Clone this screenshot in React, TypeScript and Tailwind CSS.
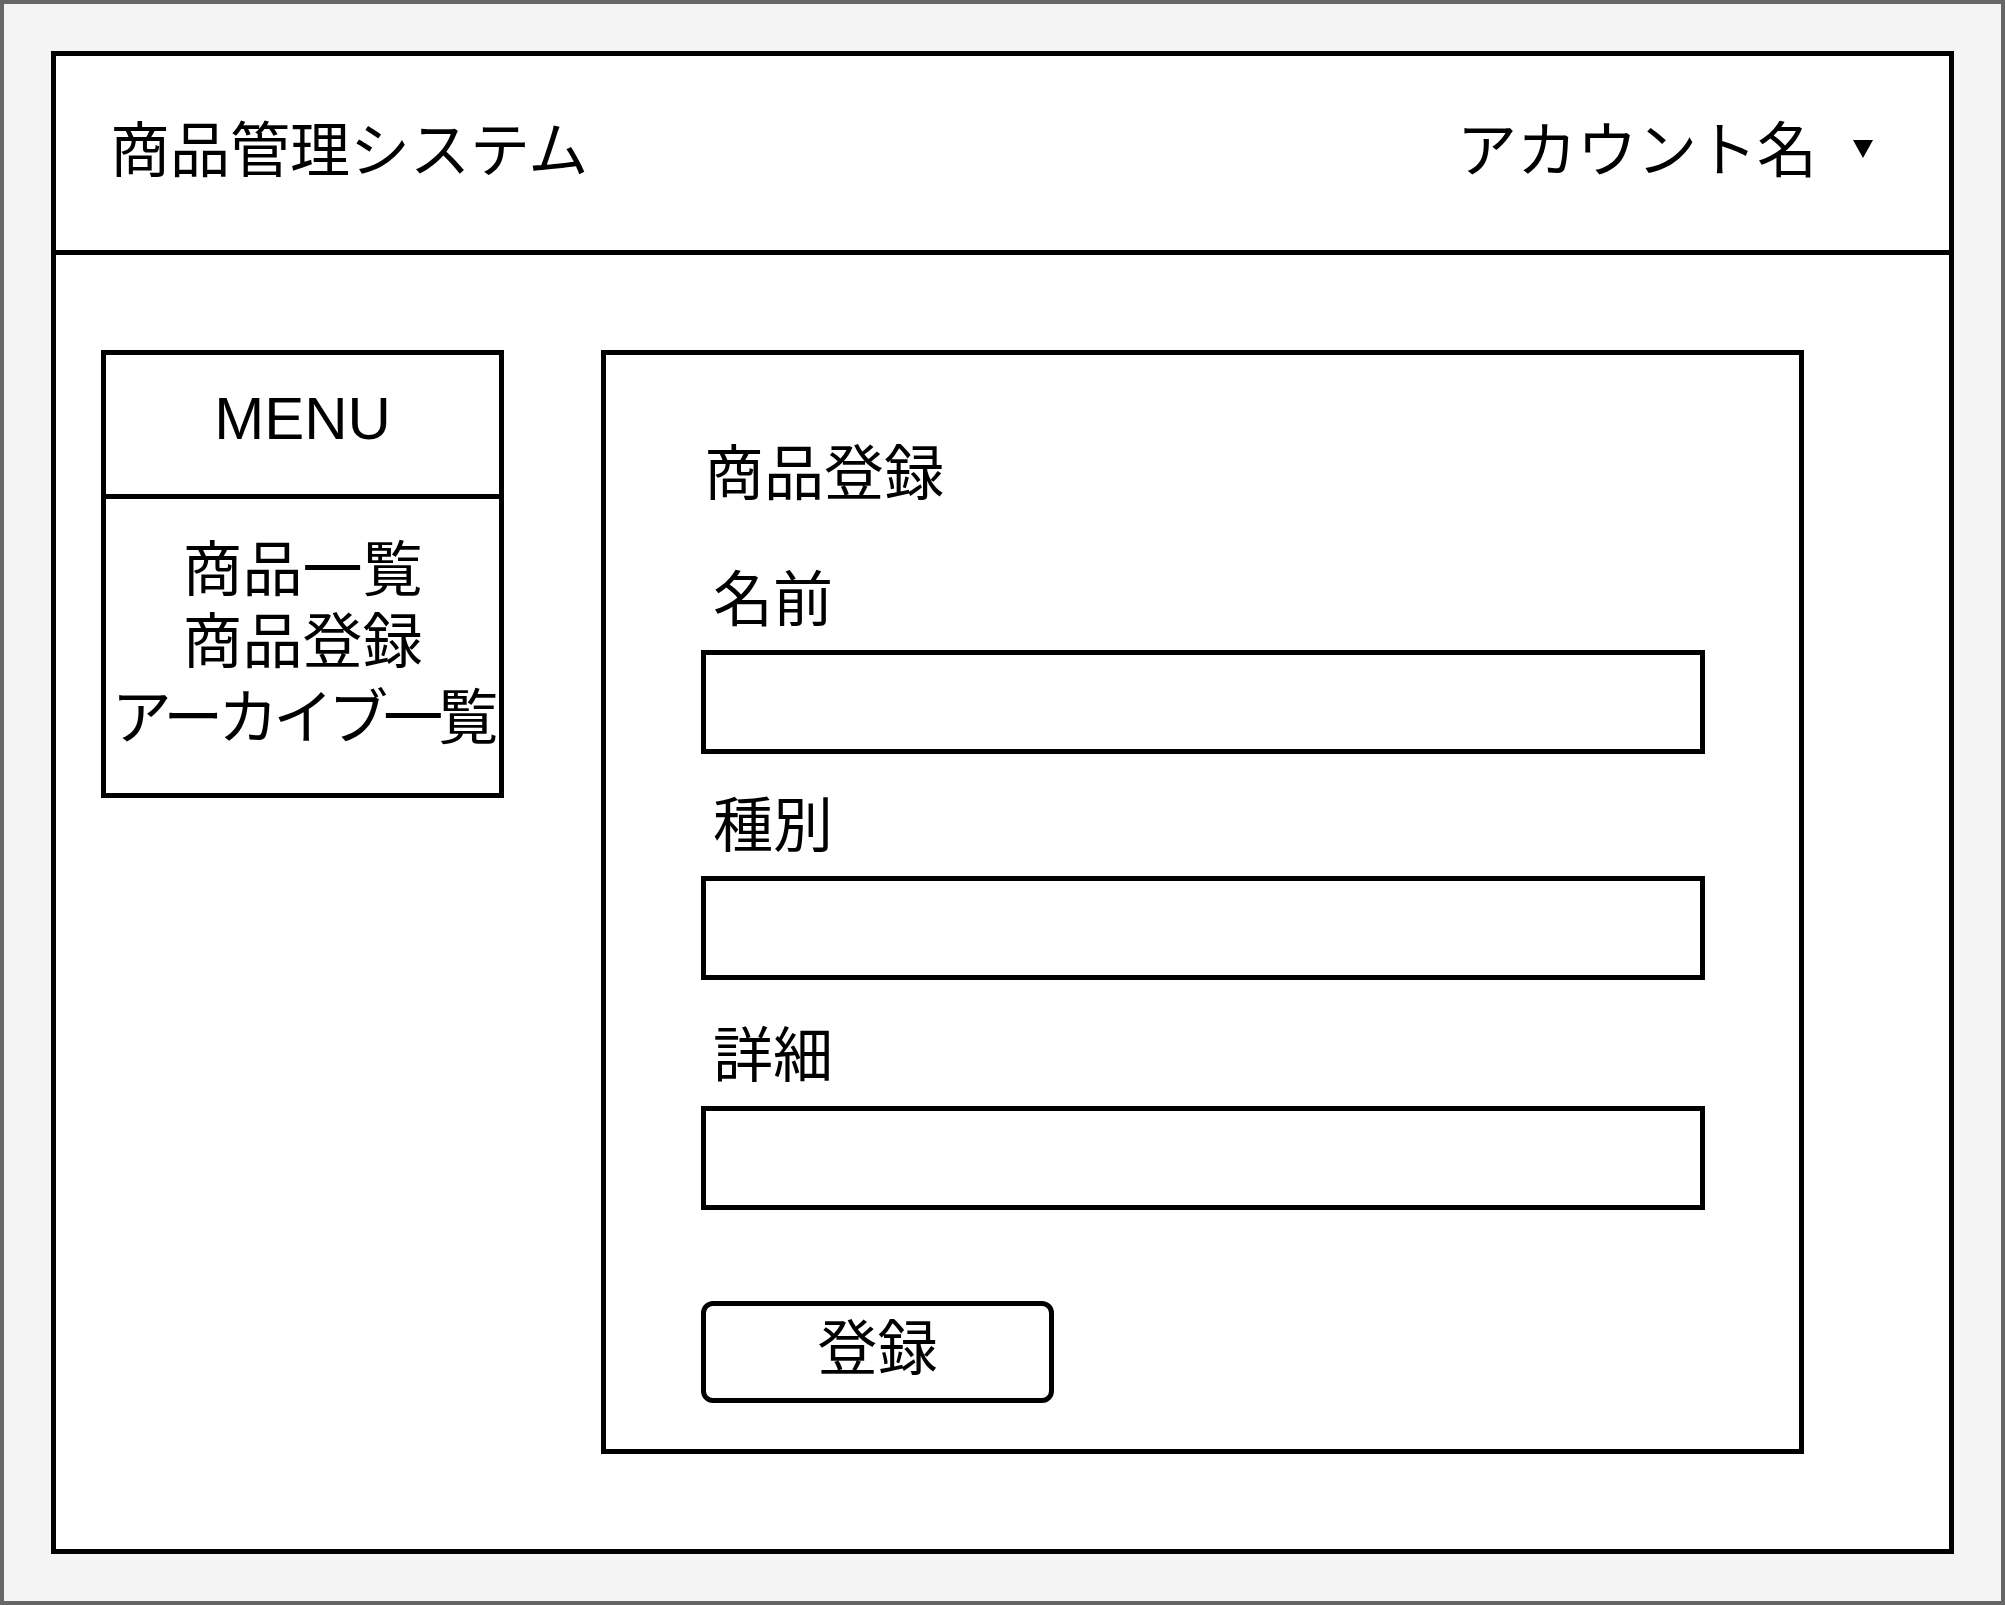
const jp = { fontFamily: '"Noto Sans CJK JP", "Noto Sans", sans-serif' };

function Field({ label, top }: { label: string; top: string }) {
  return (
    <div className={`flex flex-col ${top}`}>
      <div className="pl-[12px] text-[60px] leading-[72px] text-black">{label}</div>
      <div className="mt-[19px] h-[104px] w-[1004px] border-[5px] border-black bg-white" />
    </div>
  );
}

export default function App() {
  return (
    <div
      className="box-border h-[1605px] w-[2005px] border-4 border-[#666666] bg-[#f4f4f4] p-[47px]"
      style={jp}
    >
      <div className="flex h-full flex-col border-[5px] border-black bg-white">
        {/* Header */}
        <header className="flex h-[199px] shrink-0 items-center justify-between border-b-[5px] border-black pb-[14px] pl-[54px] pr-[76px]">
          <h1 className="text-[60px] font-normal leading-[72px] text-black">商品管理システム</h1>
          <div className="flex items-center gap-[36px]">
            <span className="text-[60px] leading-[72px] text-black">アカウント名</span>
            <svg width="20" height="18" viewBox="0 0 20 18" className="mt-[6px]">
              <polygon points="0,0 20,0 10,18" fill="black" />
            </svg>
          </div>
        </header>

        {/* Body */}
        <div className="flex items-start pl-[45px] pt-[95px]">
          {/* Menu */}
          <nav className="flex h-[448px] w-[403px] shrink-0 flex-col border-[5px] border-black">
            <div
              className="flex h-[144px] items-center justify-center border-b-[5px] border-black pb-[12px] text-[60px] leading-none text-black"
              style={{ fontFamily: '"Liberation Sans", Arial, sans-serif' }}
            >
              MENU
            </div>
            <div className="flex flex-1 flex-col items-center justify-center whitespace-nowrap pb-[14px] text-[60px] leading-[72px] text-black">
              <span>商品一覧</span>
              <span>商品登録</span>
              <span className="mt-[4px] tracking-[-5px]">アーカイブ一覧</span>
            </div>
          </nav>

          {/* Form panel */}
          <main className="ml-[97px] h-[1104px] w-[1203px] shrink-0 border-[5px] border-black pl-[95px] pt-[78px]">
            <h2 className="pl-[3px] text-[60px] font-normal leading-[72px] text-black">商品登録</h2>
            <Field label="名前" top="mt-[54px]" />
            <Field label="種別" top="mt-[31px]" />
            <Field label="詳細" top="mt-[35px]" />
            <button className="mt-[91px] flex h-[102px] w-[353px] items-center justify-center rounded-[12px] border-[5px] border-black bg-white pb-[16px] text-[60px] leading-none text-black">
              登録
            </button>
          </main>
        </div>
      </div>
    </div>
  );
}
